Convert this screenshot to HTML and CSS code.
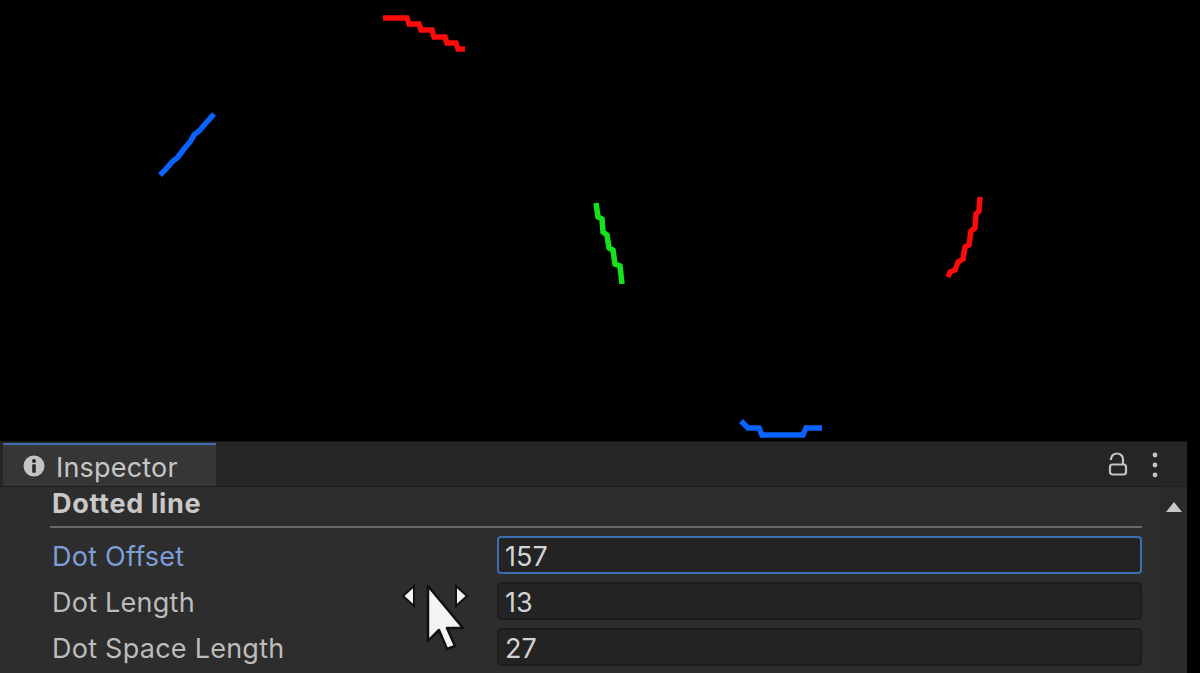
FILE: index.html
```html
<!DOCTYPE html>
<html lang="en">
  <head>
    <meta charset="UTF-8" />
    <title>Dotted line</title>
    <link rel="stylesheet" href="styles.css">
  </head>
  <body>
    <div class="scene">
      <svg class="scene-view" width="1200" height="441" viewBox="0 0 1200 441">
        <g fill="none" stroke-width="5.5" stroke-linejoin="miter">
          <polyline stroke="#ff0a0a" points="383,18 407,18 409,24 419,24 421,30 432,30 434,37 445,37 447,43 456,43 458,49 465,49" />
          <polyline stroke="#0a62ff" points="160,175 166,169 172,162 178,157 184,149 190,142 194,135 200,130 206,123 214,114" />
          <polyline stroke="#14e21c" points="596,203 598,217 602,219 603,232 607,235 609,248 613,250 615,264 620,266 622,284" />
          <polyline stroke="#ff0a0a" points="980,197 979,211 976,214 975,228 971,231 969,245 965,247 963,259 958,262 955,270 950,272 948,277" />
          <polyline stroke="#0a62ff" points="741,421 748,428 759,428 762,435 803,435 806,428 822,428" />
        </g>
      </svg>
    </div>

    <div class="inspector">
      <div class="tabbar">
        <div class="tab">
          <svg class="tab-icon" width="22" height="22" viewBox="0 0 22 22">
            <circle cx="11" cy="11" r="10.5" fill="#c4c4c4" />
            <circle cx="11" cy="6" r="2" fill="#2a2a2a" />
            <rect x="9.2" y="9.2" width="3.6" height="8.5" rx="0.8" fill="#2a2a2a" />
          </svg>
          <span>Inspector</span>
        </div>
        <div class="tab-tools">
          <svg width="22" height="26" viewBox="0 0 22 26">
            <path d="M4 8 V7 a6 5.5 0 0 1 12 0 V12" fill="none" stroke="#c4c4c4" stroke-width="2.2" />
            <rect x="3" y="12.5" width="16" height="10" rx="2.5" fill="none" stroke="#c4c4c4" stroke-width="2.2" />
          </svg>
          <svg width="8" height="26" viewBox="0 0 8 26">
            <circle cx="4" cy="3" r="2.4" fill="#c4c4c4" />
            <circle cx="4" cy="13" r="2.4" fill="#c4c4c4" />
            <circle cx="4" cy="23" r="2.4" fill="#c4c4c4" />
          </svg>
        </div>
      </div>

      <div class="panel-body">
        <div class="content">
          <div class="section-title">Dotted line</div>
          <div class="field-row">
            <label class="active">Dot Offset</label>
            <div class="field focused">157</div>
          </div>
          <div class="field-row">
            <label>Dot Length</label>
            <div class="field">13</div>
          </div>
          <div class="field-row">
            <label>Dot Space Length</label>
            <div class="field">27</div>
          </div>
        </div>
        <div class="scrollbar">
          <svg width="18" height="12" viewBox="0 0 18 12">
            <polygon points="9,1 17,11 1,11" fill="#c8c8c8" />
          </svg>
        </div>
      </div>

      <!-- slider drag cursor over the label column -->
      <svg class="drag-cursor" width="70" height="72" viewBox="0 0 70 72">
        <polygon points="2,14 13,4 13,24" fill="#f2f2f2" stroke="#111" stroke-width="2" />
        <polygon points="66,14 55,4 55,24" fill="#f2f2f2" stroke="#111" stroke-width="2" />
        <polygon points="27,4 27,59 38,48 46,67 54,64 46,46 62,46" fill="#f4f4f4" stroke="#111" stroke-width="2.5" stroke-linejoin="round" />
      </svg>
    </div>
  </body>
</html>
```

FILE: styles.css
```css
body {
  margin: 0;
  background: #000;
  font-family: Inter, "Noto Sans", sans-serif;
  overflow: hidden;
}
.scene-view {
  display: block;
}
.inspector {
  position: relative;
  width: 1187px;
  height: 232px;
  background: #2d2d2d;
  border-top: 1px solid #1a1a1a;
  display: flex;
  flex-direction: column;
}
.tabbar {
  height: 46px;
  background: #252525;
  border-bottom: 1px solid #1f1f1f;
  display: flex;
  padding-left: 3px;
  box-sizing: border-box;
}
.tab {
  width: 213px;
  margin-top: 1px;
  background: #363636;
  border-top: 2px solid #3e6cae;
  display: flex;
  align-items: center;
  gap: 11px;
  padding: 4px 0 0 20px;
  box-sizing: border-box;
  color: #c6c6c6;
  font-size: 27px;
  letter-spacing: 0.2px;
}
.tab-icon {
  margin-top: -4px;
}
.tab-tools {
  margin-left: auto;
  margin-right: 28px;
  display: flex;
  align-items: center;
  gap: 22px;
  padding-top: 2px;
}
.panel-body {
  flex: 1;
  display: flex;
}
.content {
  flex: 1;
  padding: 0 18px 0 50px;
}
.section-title {
  height: 39px;
  line-height: 34px;
  padding-left: 2px;
  border-bottom: 2px solid #6a6a6a;
  margin-bottom: 8px;
  color: #c8c8c8;
  font-size: 27px;
  font-weight: 700;
  letter-spacing: 0.7px;
}
.field-row {
  display: flex;
  align-items: center;
  height: 38px;
  margin-bottom: 8px;
}
.field-row label {
  width: 445px;
  padding: 2px 0 0 2px;
  color: #bcbcbc;
  font-size: 27px;
  letter-spacing: 0.25px;
}
.field-row label.active {
  color: #7b9fd6;
}
.field {
  flex: 1;
  height: 38px;
  box-sizing: border-box;
  background: #232323;
  border: 2px solid #1d1d1d;
  border-radius: 4px;
  padding: 2px 0 0 6px;
  line-height: 34px;
  color: #d2d2d2;
  font-size: 27px;
}
.field.focused {
  border-color: #3d6fb5;
}
.scrollbar {
  width: 27px;
  background: #2a2a2a;
  border-left: 1px solid #262626;
  display: flex;
  justify-content: center;
  padding-top: 14px;
  box-sizing: border-box;
}
.drag-cursor {
  position: absolute;
  left: 401px;
  top: 140px;
}
```
